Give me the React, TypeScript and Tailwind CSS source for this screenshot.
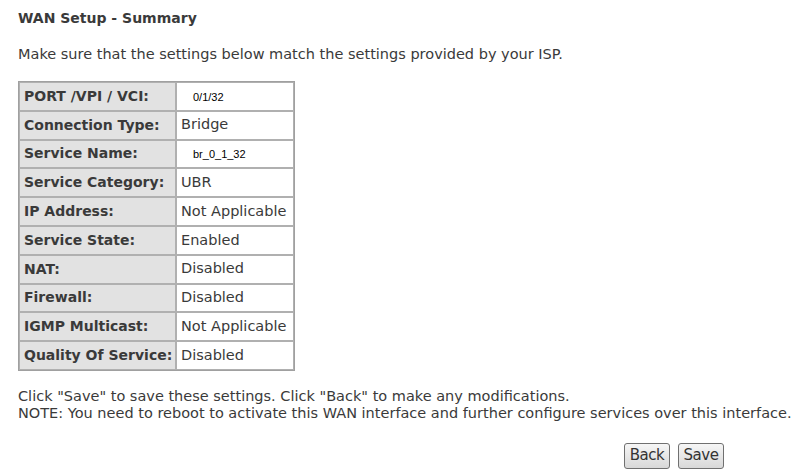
const rows: [string, string, boolean?][] = [
  ['PORT /VPI / VCI:', '0/1/32', true],
  ['Connection Type:', 'Bridge'],
  ['Service Name:', 'br_0_1_32', true],
  ['Service Category:', 'UBR'],
  ['IP Address:', 'Not Applicable'],
  ['Service State:', 'Enabled'],
  ['NAT:', 'Disabled'],
  ['Firewall:', 'Disabled'],
  ['IGMP Multicast:', 'Not Applicable'],
  ['Quality Of Service:', 'Disabled'],
];

function Btn({ label }: { label: string }) {
  return (
    <button className="h-[26px] w-[46px] rounded-[3px] border border-[#707070] bg-gradient-to-b from-[#f6f6f6] to-[#d8d8d8] text-[15px] text-[#333] leading-none tracking-[-0.5px]">
      {label}
    </button>
  );
}

export default function App() {
  return (
    <div className="w-[800px] h-[476px] bg-white text-[#3a3a3a] font-['DejaVu_Sans',sans-serif] text-[14.5px] pl-[18px] pt-[8px]">
      <div className="font-bold text-[14px] h-[24px] leading-[20px]">WAN Setup - Summary</div>
      <p className="mt-[13px] leading-[18px]">Make sure that the settings below match the settings provided by your ISP.</p>
      <table className="mt-[18px] w-[277px] border border-[#a0a0a0] border-separate border-spacing-0">
        <tbody>
          {rows.map(([k, v, small]) => (
            <tr key={k} className="h-[28.8px]">
              <td className="w-[157px] bg-[#e2e2e2] border border-[#b0b0b0] font-bold pl-[4px] pr-0 text-[14px] whitespace-nowrap">{k}</td>
              <td className="border border-[#b0b0b0] pl-[4px] pr-0 whitespace-nowrap">
                {small ? (
                  <span className="pl-[12px] font-['Liberation_Sans',sans-serif] text-[11px] text-black">{v}</span>
                ) : (
                  v
                )}
              </td>
            </tr>
          ))}
        </tbody>
      </table>
      <div className="mt-[17px] leading-[17px]">
        <p>Click "Save" to save these settings. Click "Back" to make any modifications.</p>
        <p>NOTE: You need to reboot to activate this WAN interface and further configure services over this interface.</p>
      </div>
      <div className="flex gap-[8px] pl-[606px] mt-[21px]">
        <Btn label="Back" />
        <Btn label="Save" />
      </div>
    </div>
  );
}
